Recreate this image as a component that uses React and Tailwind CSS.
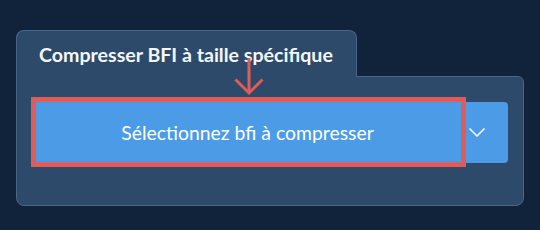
export default function App() {
  return (
    <div className="relative min-h-screen w-[540px] h-[230px] bg-[#11233a] pt-[30px] pl-[16px] font-['Lato','Liberation_Sans',sans-serif]">
      <div className="w-[508px]">
        {/* tab */}
        <div className="relative z-10 -mb-px h-[47px] w-[341px] rounded-t-[8px] border border-b-0 border-[#4a6587] bg-[#2d4a6b] pl-[22px] pt-[12px]">
          <h2 className="text-[19.6px] leading-[24px] font-bold text-[#f4f7fb] whitespace-nowrap">
            Compresser BFI à taille spécifique
          </h2>
        </div>

        {/* panel */}
        <div className="h-[130px] rounded-b-[8px] rounded-tr-[6px] border border-[#4a6587] bg-[#2d4a6b] pl-[16px] pt-[25px]">
          <div className="relative flex h-[61px] w-[475px] rounded-[4px] bg-[#4b9be6]">
            <button className="flex w-[429px] items-center justify-center text-[19.4px] leading-[24px] font-normal text-white">
              Sélectionnez bfi à compresser
            </button>
            <div className="flex flex-1 items-center pl-[7px]">
              <svg width="16" height="9" viewBox="0 0 16 9" fill="none">
                <polyline points="0.5,0.5 8,8 15.5,0.5" stroke="#ffffff" strokeWidth="1.5" />
              </svg>
            </div>
            {/* highlight box */}
            <div className="absolute left-[-2px] top-[-5px] h-[70px] w-[435px] border-[5px] border-[#df5c58]"></div>
          </div>
        </div>
      </div>

      {/* arrow */}
      <svg className="absolute z-20 left-[234px] top-[56px]" width="30" height="40" viewBox="0 0 30 40" fill="none">
        <line x1="15" y1="2" x2="15" y2="36" stroke="#df5c58" strokeWidth="3" />
        <polyline points="1.5,23.5 15,37 28.5,23.5" stroke="#df5c58" strokeWidth="3" />
      </svg>
    </div>
  );
}
